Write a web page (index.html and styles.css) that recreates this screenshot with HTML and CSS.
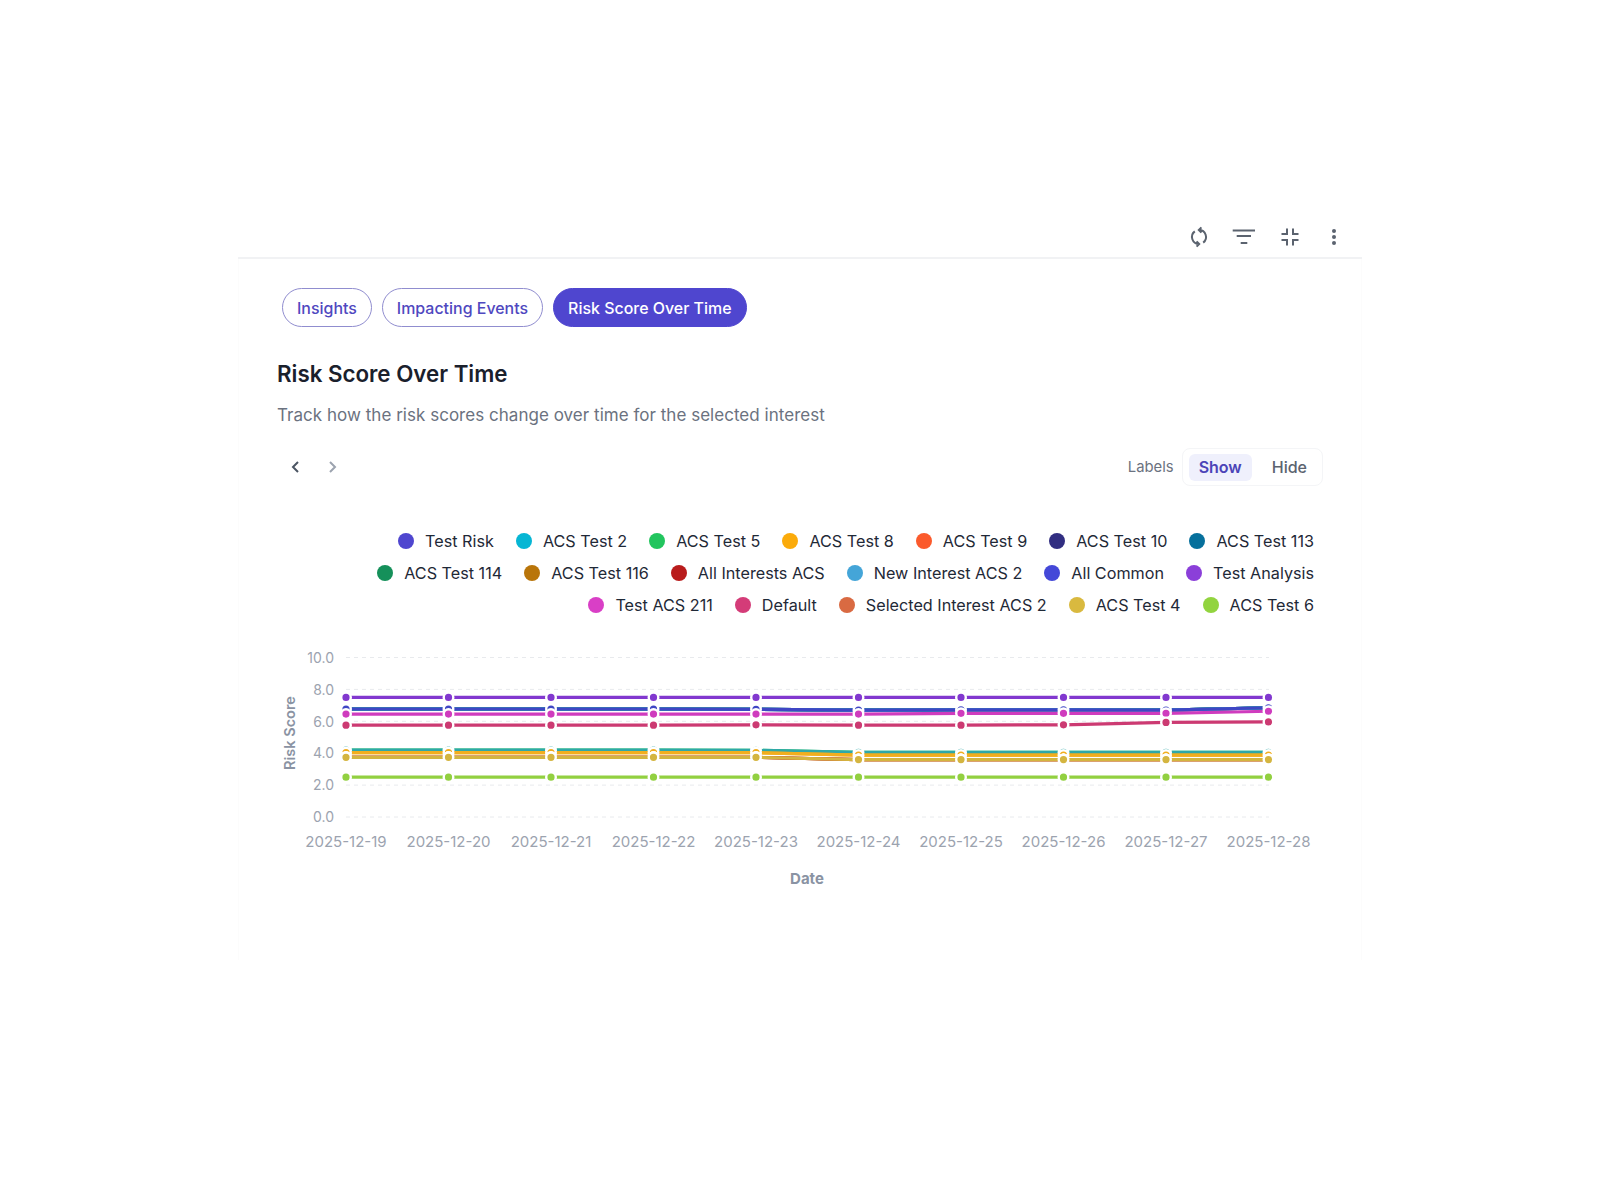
FILE: index.html
```html
<!DOCTYPE html>
<html lang="en">
<head>
<meta charset="utf-8">
<title>Risk Score Over Time</title>
<link rel="stylesheet" href="styles.css">
</head>
<body>
<main class="card">
  <header class="toolbar">
    <button class="icon-btn" aria-label="Refresh">
      <svg viewBox="0 0 24 24" class="icon"><path d="M12 5a7 7 0 0 1 4.200 12.600M14.400 2.400 11.800 5l2.600 2.600M12 19a7 7 0 0 1-4.200-12.600M9.600 21.600 12.200 19l-2.600-2.600"/></svg>
    </button>
    <button class="icon-btn" aria-label="Filter">
      <svg viewBox="0 0 24 24" class="icon"><path d="M.7 5.500H23M4.700 11H19M8.700 18h6.600"/></svg>
    </button>
    <button class="icon-btn" aria-label="Collapse">
      <svg viewBox="0 0 24 24" class="icon"><path d="M4.500 9H10V3.500M16 3.500V9h5.500M4.500 15H10v5.500M16 20.500V15h5.500"/></svg>
    </button>
    <button class="icon-btn" aria-label="More">
      <svg viewBox="0 0 24 24" class="icon-solid"><circle cx="12" cy="6" r="2"/><circle cx="12" cy="12" r="2"/><circle cx="12" cy="18" r="2"/></svg>
    </button>
  </header>

  <section class="body">
    <nav class="tabs">
      <a class="tab">Insights</a>
      <a class="tab">Impacting Events</a>
      <a class="tab tab-active">Risk Score Over Time</a>
    </nav>

    <h1 class="title">Risk Score Over Time</h1>
    <p class="subtitle">Track how the risk scores change over time for the selected interest</p>

    <div class="controls">
      <div class="pager">
        <svg viewBox="0 0 16 16" class="chev"><path d="M10 3 5 8l5 5"/></svg>
        <svg viewBox="0 0 16 16" class="chev chev-off"><path d="m6 3 5 5-5 5"/></svg>
      </div>
      <div class="labels">
        <span class="labels-name">Labels</span>
        <div class="segment">
          <span class="seg seg-on">Show</span>
          <span class="seg">Hide</span>
        </div>
      </div>
    </div>

    <ul class="legend">
      <li class="item"><i class="dot c0"></i>Test Risk</li>
      <li class="item"><i class="dot c1"></i>ACS Test 2</li>
      <li class="item"><i class="dot c2"></i>ACS Test 5</li>
      <li class="item"><i class="dot c3"></i>ACS Test 8</li>
      <li class="item"><i class="dot c4"></i>ACS Test 9</li>
      <li class="item"><i class="dot c5"></i>ACS Test 10</li>
      <li class="item"><i class="dot c6"></i>ACS Test 113</li>
      <li class="item"><i class="dot c7"></i>ACS Test 114</li>
      <li class="item"><i class="dot c8"></i>ACS Test 116</li>
      <li class="item"><i class="dot c9"></i>All Interests ACS</li>
      <li class="item"><i class="dot c10"></i>New Interest ACS 2</li>
      <li class="item"><i class="dot c11"></i>All Common</li>
      <li class="item"><i class="dot c12"></i>Test Analysis</li>
      <li class="item"><i class="dot c13"></i>Test ACS 211</li>
      <li class="item"><i class="dot c14"></i>Default</li>
      <li class="item"><i class="dot c15"></i>Selected Interest ACS 2</li>
      <li class="item"><i class="dot c16"></i>ACS Test 4</li>
      <li class="item"><i class="dot c17"></i>ACS Test 6</li>
    </ul>

    <svg class="chart" id="chart" viewBox="272 640 1060 260" role="img" aria-label="Risk score line chart">
      <g class="grid">
        <line x1="346" x2="1269" y1="657.500" y2="657.500"/>
        <line x1="346" x2="1269" y1="689.400" y2="689.400"/>
        <line x1="346" x2="1269" y1="721.300" y2="721.300"/>
        <line x1="346" x2="1269" y1="753.200" y2="753.200"/>
        <line x1="346" x2="1269" y1="785.100" y2="785.100"/>
        <line x1="346" x2="1269" y1="817" y2="817"/>
      </g>
      <g class="ytick">
        <text x="334" y="662.500">10.0</text>
        <text x="334" y="695">8.0</text>
        <text x="334" y="727">6.0</text>
        <text x="334" y="758.200">4.0</text>
        <text x="334" y="790.100">2.0</text>
        <text x="334" y="822">0.0</text>
      </g>
      <g class="xtick">
        <text x="346" y="846.500">2025-12-19</text>
        <text x="448.500" y="846.500">2025-12-20</text>
        <text x="551" y="846.500">2025-12-21</text>
        <text x="653.500" y="846.500">2025-12-22</text>
        <text x="756" y="846.500">2025-12-23</text>
        <text x="858.500" y="846.500">2025-12-24</text>
        <text x="961" y="846.500">2025-12-25</text>
        <text x="1063.500" y="846.500">2025-12-26</text>
        <text x="1166" y="846.500">2025-12-27</text>
        <text x="1268.500" y="846.500">2025-12-28</text>
      </g>
      <text class="axis-title axis-x" x="807" y="884">Date</text>
      <text class="axis-title" transform="translate(295 733) rotate(-90)">Risk Score</text>
      <g id="series"></g>
    </svg>
  </section>
</main>
<script src="chart.js"></script>
</body>
</html>
```

FILE: styles.css
```css
* { box-sizing: border-box; }

html, body { margin: 0; background: #fff; }

body {
  font-family: "Inter", "Liberation Sans", sans-serif;
  padding-top: 216px;
  min-height: 1200px;
}

.card {
  width: 1124px;
  margin: 0 auto;
}

.toolbar {
  display: flex;
  justify-content: flex-end;
  align-items: center;
  gap: 21px;
  height: 43px;
  padding-right: 16px;
  border-bottom: 2px solid #f1f2f4;
}

.icon-btn {
  width: 24px;
  height: 24px;
  padding: 0;
  border: 0;
  background: none;
  display: block;
}

.icon { display: block; width: 24px; height: 24px; fill: none; stroke: #5b636f; stroke-width: 2; }
.icon-solid { display: block; width: 24px; height: 24px; fill: #5b636f; }

.body {
  height: 701px;
  padding: 29px 38px 0;
  border-left: 1px solid #fcfcfc;
  border-right: 1px solid #fcfcfc;
}

.tabs { display: flex; gap: 10px; margin-left: 5px; }

.tab {
  height: 39px;
  display: flex;
  align-items: center;
  padding: 1px 14px 0;
  border: 1px solid #908dcf;
  border-radius: 20px;
  color: #4f48c0;
  font-size: 15.950px;
  font-weight: 500;
}

.tab-active { background: #4f46cf; border-color: #4f46cf; color: #fff; }

.title {
  margin: 31px 0 0;
  font-size: 22.300px;
  line-height: 32px;
  font-weight: 600;
  color: #1a202c;
}

.subtitle {
  margin: 13px 0 0;
  font-size: 17px;
  letter-spacing: 0.03px;
  line-height: 24px;
  color: #6b7280;
}

.controls {
  display: flex;
  justify-content: space-between;
  align-items: center;
  height: 38px;
  margin-top: 21px;
}

.pager { display: flex; gap: 20px; padding-left: 11px; }

.chev { display: block; width: 16px; height: 16px; fill: none; stroke: #4b5563; stroke-width: 2; }
.chev-off { stroke: #9ca3af; }

.labels { display: flex; align-items: center; gap: 8px; }

.labels-name { font-size: 14.800px; color: #6b7280; }

.segment {
  display: flex;
  align-items: center;
  height: 38px;
  padding: 0 5px 0 6px;
  border: 1px solid #f4f5f7;
  border-radius: 8px;
}

.seg {
  height: 27px;
  display: flex;
  align-items: center;
  padding: 0 10px;
  margin-right: 5px;
  font-size: 16px;
  font-weight: 500;
  border-radius: 6px;
  color: #5b636f;
}

.seg:last-child { margin-right: 0; padding-left: 15px; padding-right: 10px; }

.seg-on { background: #eff0fc; color: #4b44b8; font-weight: 600; }

.legend {
  display: flex;
  flex-wrap: wrap;
  justify-content: flex-end;
  gap: 8px 22px;
  margin: 43px 9px 0 60px;
  padding: 0;
  list-style: none;
}

.item {
  display: flex;
  align-items: center;
  gap: 11px;
  height: 24px;
  font-size: 16.200px;
  color: #1f2937;
}

.dot { display: block; width: 16px; height: 16px; border-radius: 50%; }

.c0 { background: #4f46cf; }
.c1 { background: #06b6d4; }
.c2 { background: #22c55e; }
.c3 { background: #fbab0b; }
.c4 { background: #fb5a2c; }
.c5 { background: #312e81; }
.c6 { background: #06709c; }
.c7 { background: #15905a; }
.c8 { background: #b9750a; }
.c9 { background: #b91c1c; }
.c10 { background: #44a5d8; }
.c11 { background: #4448d8; }
.c12 { background: #8b3fd9; }
.c13 { background: #d93fc6; }
.c14 { background: #d43c78; }
.c15 { background: #d96a42; }
.c16 { background: #d9b93f; }
.c17 { background: #92d43f; }

.chart { display: block; width: 1060px; height: 260px; margin: 23px 0 0 -5px; }

.grid line { stroke: #e8eaed; stroke-width: 1; stroke-dasharray: 4 4; }

.ytick text { font-size: 14px; fill: #9ca3af; text-anchor: end; }
.xtick text { font-size: 15px; fill: #9ca3af; text-anchor: middle; }

.axis-title { font-size: 14.500px; font-weight: 600; fill: #8a93a3; text-anchor: middle; }
.axis-x { font-size: 15px; font-weight: 700; }

.line { fill: none; stroke-width: 3.200; }
.point { stroke: #fff; stroke-width: 2.400; }
```

FILE: chart.js
```js
// Risk score per day for each interest, in legend order (later series paint on top).
const flat = (v) => Array(10).fill(v);
const blue = [6.77, 6.77, 6.77, 6.77, 6.75, 6.7, 6.72, 6.72, 6.7, 6.85];
const teal = [4.2, 4.2, 4.2, 4.2, 4.18, 4.05, 4.05, 4.05, 4.05, 4.05];
const amber = [4.03, 4.03, 4.03, 4.03, 4.03, 3.875, 3.875, 3.875, 3.875, 3.875];
const gold = [3.74, 3.74, 3.74, 3.74, 3.74, 3.6, 3.6, 3.6, 3.6, 3.6];

const series = [
  ["#4f46cf", blue],
  ["#22c55e", teal],
  ["#2fa8a8", teal],
  ["#f2ae1e", amber],
  ["#f2ae1e", amber],
  ["#312e81", blue],
  ["#06709c", blue],
  ["#15905a", blue],
  ["#b9750a", gold],
  ["#b91c1c", gold],
  ["#44a5d8", blue],
  ["#3f46c4", blue],
  ["#8238cf", flat(7.5)],
  ["#cf3cbe", [6.45, 6.45, 6.45, 6.45, 6.45, 6.45, 6.5, 6.5, 6.5, 6.63]],
  ["#cc3a72", [5.76, 5.76, 5.76, 5.76, 5.78, 5.76, 5.76, 5.78, 5.93, 5.96]],
  ["#d96a42", gold],
  ["#d4b540", gold],
  ["#92d040", flat(2.5)],
];

const NS = "http://www.w3.org/2000/svg";
const host = document.getElementById("series");
const xAt = (i) => 346 + 102.5 * i;
const yAt = (v) => 817 - 15.95 * v;

for (const [color, values] of series) {
  const line = document.createElementNS(NS, "polyline");
  line.setAttribute("class", "line");
  line.setAttribute("stroke", color);
  line.setAttribute("points", values.map((v, i) => `${xAt(i)},${yAt(v)}`).join(" "));
  host.appendChild(line);
  values.forEach((v, i) => {
    const c = document.createElementNS(NS, "circle");
    c.setAttribute("class", "point");
    c.setAttribute("fill", color);
    c.setAttribute("cx", xAt(i));
    c.setAttribute("cy", yAt(v));
    c.setAttribute("r", 4.8);
    host.appendChild(c);
  });
}
```
